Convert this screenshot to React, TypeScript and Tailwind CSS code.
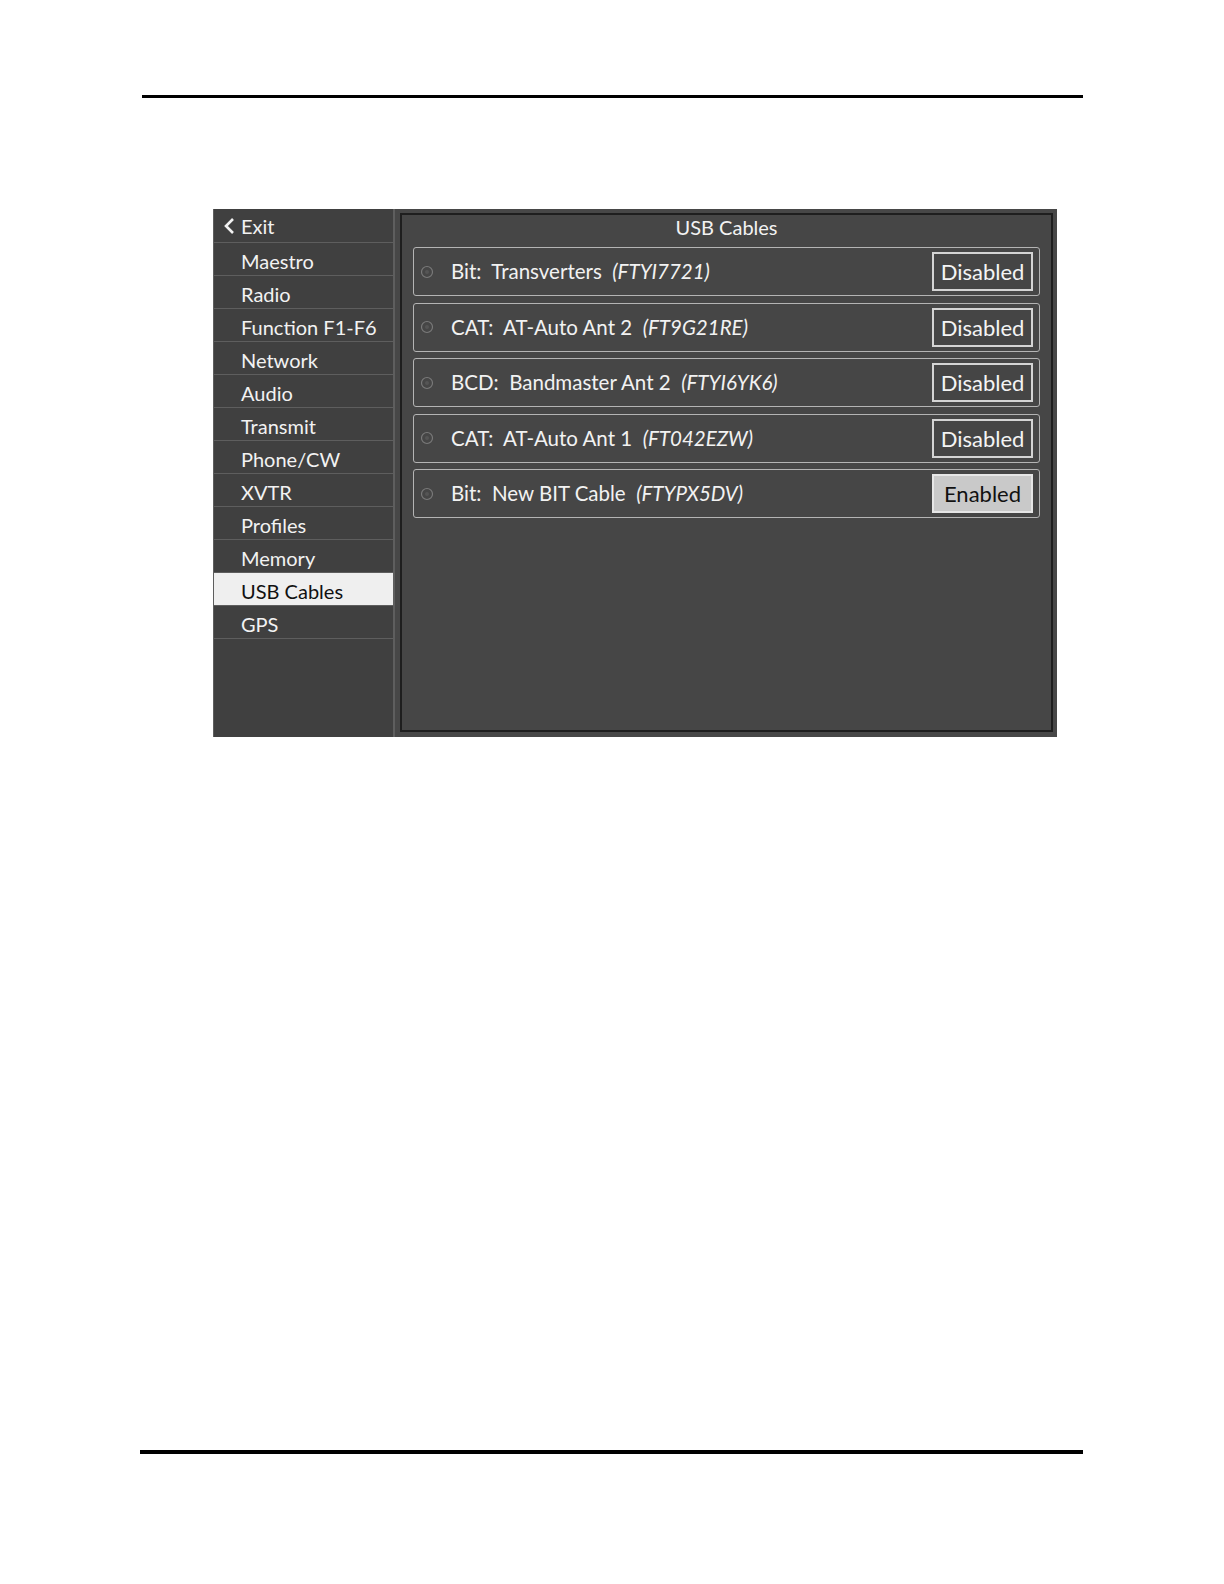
import React from 'react';

const menu = [
  'Maestro',
  'Radio',
  'Function F1-F6',
  'Network',
  'Audio',
  'Transmit',
  'Phone/CW',
  'XVTR',
  'Profiles',
  'Memory',
  'USB Cables',
  'GPS',
];

interface Cable {
  kind: string;
  name: string;
  serial: string;
  enabled: boolean;
}

const cables: Cable[] = [
  { kind: 'Bit:', name: 'Transverters', serial: '(FTYI7721)', enabled: false },
  { kind: 'CAT:', name: 'AT-Auto Ant 2', serial: '(FT9G21RE)', enabled: false },
  { kind: 'BCD:', name: 'Bandmaster Ant 2', serial: '(FTYI6YK6)', enabled: false },
  { kind: 'CAT:', name: 'AT-Auto Ant 1', serial: '(FT042EZW)', enabled: false },
  { kind: 'Bit:', name: 'New BIT Cable', serial: '(FTYPX5DV)', enabled: true },
];

const font = { fontFamily: 'Lato, "Noto Sans", sans-serif' };

const CableRow = ({ cable }: { cable: Cable }) => (
  <div className="flex h-[49px] items-center rounded-[3px] border border-[#b4b4b4] pl-[6px] pr-[6px]">
    <svg width="14" height="14" viewBox="0 0 14 14" className="shrink-0">
      <circle cx="7" cy="7" r="5.5" fill="none" stroke="#7a7a7a" strokeWidth="1.2" />
      <circle cx="7" cy="7" r="2" fill="#555" />
    </svg>
    <div className="ml-[17px] flex-1 whitespace-pre text-[20.5px] text-[#f2f2f2]">
      {cable.kind}  {cable.name}  <span className="italic">{cable.serial}</span>
    </div>
    <div
      className={`flex h-[39px] w-[101px] items-center justify-center border-2 text-[22px] ${
        cable.enabled
          ? 'border-[#e6e6e6] bg-[#c9c9c9] text-[#111]'
          : 'border-[#d4d4d4] bg-[#454545] text-[#f4f4f4]'
      }`}
    >
      {cable.enabled ? 'Enabled' : 'Disabled'}
    </div>
  </div>
);

export default function App() {
  return (
    <div className="h-[1584px] w-[1224px] bg-white pt-[95px]" style={font}>
      <div className="ml-[142px] h-[3px] w-[941px] bg-black" />

      <div className="ml-[213px] mt-[111px] flex h-[528px] w-[844px] bg-[#474747]">
        {/* sidebar */}
        <div className="flex w-[182px] flex-col border-x border-r-2 border-x-[#5e5e5e] bg-[#404040]">
          <div className="flex h-[34px] items-center border-b border-[#5e5e5e] pl-[9px] text-[20px] text-[#f2f2f2]">
            <svg width="14" height="20" viewBox="0 0 14 20" className="mr-[4px]">
              <polyline points="10,3 3,10 10,17" fill="none" stroke="#f2f2f2" strokeWidth="2.6" />
            </svg>
            Exit
          </div>
          {menu.map((item) => (
            <div
              key={item}
              className={`flex h-[33px] items-center border-b border-[#5e5e5e] pl-[27px] pt-[3px] text-[20px] ${
                item === 'USB Cables' ? 'bg-[#efefef] text-[#111]' : 'text-[#f2f2f2]'
              }`}
            >
              {item}
            </div>
          ))}
        </div>

        {/* main panel */}
        <div className="flex-1 pb-[5px] pl-[5px] pr-[4px] pt-[4px]">
          <div className="flex h-full flex-col border-2 border-[#1e1e1e] bg-[#464646] px-[11px]">
            <div className="h-[32px] text-center text-[20px] leading-[25px] text-[#f2f2f2]">USB Cables</div>
            <div className="flex flex-col gap-[6.5px]">
              {cables.map((c) => (
                <CableRow key={c.serial} cable={c} />
              ))}
            </div>
          </div>
        </div>
      </div>

      <div className="ml-[140px] mt-[713px] h-[4px] w-[943px] bg-black" />
    </div>
  );
}
